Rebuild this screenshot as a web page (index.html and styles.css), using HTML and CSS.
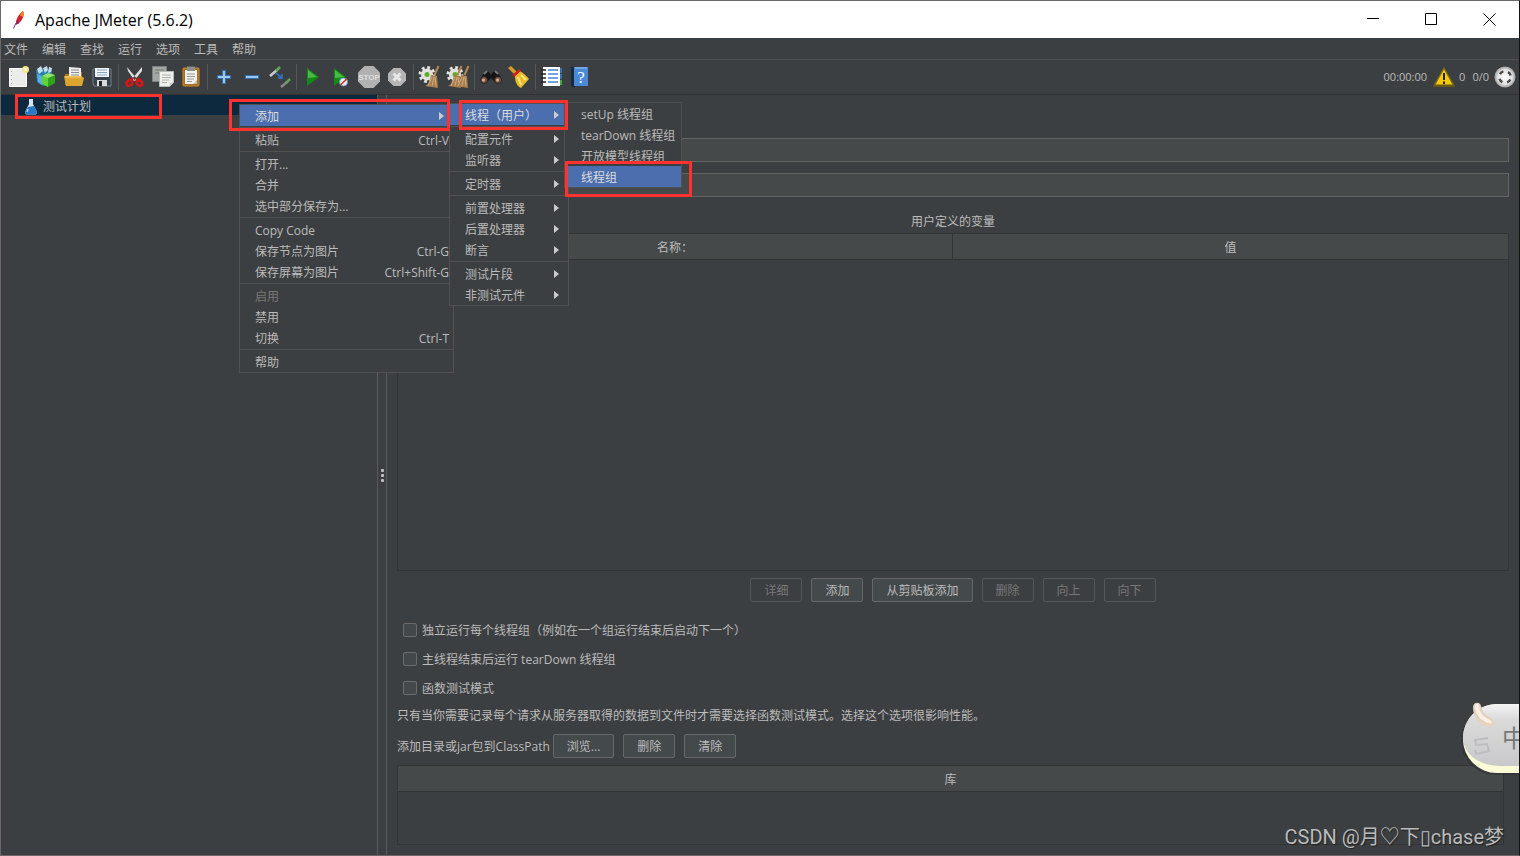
FILE: index.html
```html
<!DOCTYPE html>
<html lang="zh-CN">
<head>
<meta charset="utf-8">
<title>Apache JMeter (5.6.2)</title>
<link rel="stylesheet" href="styles.css">
</head>
<body>
<div class="window">
  <header class="titlebar">
    <svg class="feather" width="14" height="20" viewBox="0 0 14 20"><path d="M1.500 18.500 4 13" stroke="#7a2a78" stroke-width="1"/><path d="M4 14.500C3.500 10 6 5 11 1c1.200 2 .8 5-1 8.500C8.500 12 6.500 13.500 4 14.500z" fill="#d22128"/><path d="M8 6c.8-2 1.500-4 3-5 1 1.500 1 3.500.3 5.500z" fill="#f28a1c"/><path d="M4 14.500c0-2 .3-3.500 1.200-5l2.300 3.500c-1 .8-2 1.300-3.500 1.500z" fill="#9e2064"/></svg>
    <h1 class="title">Apache JMeter (5.6.2)</h1>
    <div class="win-controls">
      <button class="win-btn" aria-label="最小化"><svg width="13" height="13" viewBox="0 0 13 13"><path d="M0 5.500h12" stroke="#000"/></svg></button>
      <button class="win-btn" aria-label="最大化"><svg width="13" height="13" viewBox="0 0 13 13"><path d="M.5.500h11v11H.5z" fill="none" stroke="#000"/></svg></button>
      <button class="win-btn" aria-label="关闭"><svg width="13" height="13" viewBox="0 0 13 13"><path d="m.5.500 12 12m0-12-12 12" stroke="#000"/></svg></button>
    </div>
  </header>
  <nav class="menubar">
    <button>文件</button><button>编辑</button><button>查找</button><button>运行</button><button>选项</button><button>工具</button><button>帮助</button>
  </nav>
  <div class="toolbar">
    <button class="tool" aria-label="新建"><svg width="24" height="24" viewBox="0 0 24 24"><path d="M3.500 3.500h17v18h-17z" fill="#ececea" stroke="#fff"/><path d="M5.500 6v13" stroke="#aaa" stroke-dasharray="1 3"/><circle cx="19.500" cy="4.500" r="3.500" fill="#f4e68a"/><circle cx="19.500" cy="4.500" r="1.500" fill="#fffbe0"/></svg></button>
    <button class="tool" aria-label="模板"><svg width="24" height="24" viewBox="0 0 24 24"><path d="m2 5 7-2 9 2v13l-9 3-6-4z" fill="#2581b5"/><path d="m3 4 4-3 2 5-4 3zm6-1 4-2 1 4-3 3zm6-1 3 1-1 4-3 1z" fill="#c8dce8"/><path d="m3 9 5 2v9l-4-3z" fill="#5ab0dd"/><path d="m8 11 6-3 7 2v8l-7 4-6-3z" fill="#2fa51a"/><path d="m8 11 6 2v9l-6-3z" fill="#5ed238"/><path d="m8 11 6-3 7 2-7 3z" fill="#95e671"/></svg></button>
    <button class="tool" aria-label="打开"><svg width="24" height="24" viewBox="0 0 24 24"><path d="M3 9h4V7h13v13H3z" fill="#a97817"/><path d="m7 2 12 1v12H7z" fill="#eee"/><path d="M9 5h8M9 7.500h8M9 10h8" stroke="#8f8f8f"/><path d="M2 11h17l3 2-2 8H4z" fill="#dca530"/><path d="M3 12h16" stroke="#f9da7d"/></svg></button>
    <button class="tool" aria-label="保存"><svg width="24" height="24" viewBox="0 0 24 24"><path d="M3 4h18v17H4l-1-2z" fill="#384149" stroke="#71818a"/><path d="M5 3h14v9H5z" fill="#f3f6fa"/><path d="M7 5h10M7 7.500h10M7 10h10" stroke="#86a5c9"/><path d="M7 15h10v6H7z" fill="#dadada"/><path d="M9 16h3v5H9z" fill="#202428"/></svg></button>
    <span class="sep"></span>
    <button class="tool" aria-label="剪切"><svg width="24" height="24" viewBox="0 0 24 24"><path d="m4 2 10 12-2 2L5 6zm15 0L9 14l2 2 8-10z" fill="#dedede"/><path d="m10 14-4 1m7-1 4 1" stroke="#c11212" stroke-width="3"/><ellipse cx="6.500" cy="18" rx="3" ry="2.500" transform="rotate(-35 6.500 18)" fill="none" stroke="#d71717" stroke-width="2.500"/><ellipse cx="16.500" cy="18" rx="3" ry="2.500" transform="rotate(35 16.500 18)" fill="none" stroke="#d71717" stroke-width="2.500"/></svg></button>
    <button class="tool" aria-label="复制"><svg width="24" height="24" viewBox="0 0 24 24"><path d="M1.500 1.500h14v15h-14z" fill="#a3a7a3" stroke="#7c807d"/><path d="M4 5h9M4 8h6" stroke="#747874"/><path d="M8.500 6.500h14v11l-4 4h-10z" fill="#efefed" stroke="#b8bab8"/><path d="M11 10h9M11 12.500h9M11 15h7M11 17.500h5" stroke="#b0b0b0"/><path d="M18.500 21.500v-4h4z" fill="#cfcfcf"/></svg></button>
    <button class="tool" aria-label="粘贴"><svg width="24" height="24" viewBox="0 0 24 24"><rect x="4" y="3" width="16" height="18" rx="1" fill="#a56c22" stroke="#d28b25"/><path d="M6 5h12v14H6z" fill="#f1f1ef"/><path d="M8 1.500h8V6H8z" fill="#8c8f8c"/><path d="M8 9h8M8 11.500h8M8 14h7M8 16.500h5" stroke="#989898"/><path d="m14 19 4-4v4z" fill="#bfbfbf"/></svg></button>
    <span class="sep"></span>
    <button class="tool" aria-label="展开"><svg width="24" height="24" viewBox="0 0 24 24"><path d="M12 5v14M5 12h14" stroke="#346eaf" stroke-width="4"/><path d="M12 6v12M6 12h12" stroke="#9bc8f1" stroke-width="2"/></svg></button>
    <button class="tool" aria-label="折叠"><svg width="24" height="24" viewBox="0 0 24 24"><path d="M5 12h14" stroke="#346eaf" stroke-width="4"/><path d="M6 12h12" stroke="#9bc8f1" stroke-width="2"/></svg></button>
    <button class="tool" aria-label="切换"><svg width="24" height="24" viewBox="0 0 24 24"><path d="m2 11 7-6" stroke="#c8ccca" stroke-width="2.500"/><path d="m8 6 4-4" stroke="#65a55b" stroke-width="2.500"/><path d="m13 22 6-5" stroke="#848988" stroke-width="2.500"/><path d="m18 18 4-4" stroke="#659f63" stroke-width="2.500"/><path d="m8 8 6 5m0-4v4H10" fill="none" stroke="#2e79cf" stroke-width="1.500"/></svg></button>
    <span class="sep"></span>
    <button class="tool" aria-label="启动"><svg width="24" height="24" viewBox="0 0 24 24"><path d="m6 3 12 9-12 9z" fill="#138a15"/><path d="m7 5 9 7-9 1z" fill="#49b947"/></svg></button>
    <button class="tool" aria-label="不停顿开始"><svg width="24" height="24" viewBox="0 0 24 24"><path d="m5 3 12 9-12 9z" fill="#138a15"/><path d="m6 5 9 7-9 1z" fill="#49b947"/><circle cx="14.500" cy="17" r="4" fill="#eee" stroke="#6b9bc7"/><path d="m11.500 20 6-6" stroke="#d72b22" stroke-width="1.500"/></svg></button>
    <button class="tool" aria-label="停止"><svg width="24" height="24" viewBox="0 0 24 24"><path d="M7.500 1h9L23 7.500v9L16.500 23h-9L1 16.500v-9z" fill="#b1b1b1"/><text x="12" y="15" class="stop-text">STOP</text></svg></button>
    <button class="tool" aria-label="关闭"><svg width="24" height="24" viewBox="0 0 24 24"><path d="M8.500 3h7L21 8.500v7L15.500 21h-7L3 15.500v-7z" fill="#b5b5b5"/><path d="m8.500 8.500 7 7m0-7-7 7" stroke="#e7e7e7" stroke-width="3"/></svg></button>
    <span class="sep"></span>
    <button class="tool" aria-label="清除"><svg width="24" height="24" viewBox="0 0 24 24"><use href="#gear"/><use href="#brush"/></svg></button>
    <button class="tool" aria-label="清除全部"><svg width="24" height="24" viewBox="0 0 24 24"><use href="#gear"/><use href="#brush" x="-5"/><use href="#brush" x="2"/></svg></button>
    <span class="sep"></span>
    <button class="tool" aria-label="查找"><svg width="24" height="24" viewBox="0 0 24 24"><path d="m3 11 4-5 3 1 2 3 2-3 3-1 4 5 2 4-6 3-5-5-5 5-6-3z" fill="#141414"/><path d="m5 9 3-3m8 0 3 3" stroke="#777" stroke-width="2"/><circle cx="5" cy="15" r="3.500" fill="#7d5440" stroke="#252525"/><circle cx="19" cy="15" r="3.500" fill="#7d5440" stroke="#252525"/><circle cx="4.500" cy="15" r="1.500" fill="#ceb3a0"/><circle cx="18.500" cy="15" r="1.500" fill="#ceb3a0"/></svg></button>
    <button class="tool" aria-label="重置搜索"><svg width="24" height="24" viewBox="0 0 24 24"><path d="m1 3 3-2 6 6-2 3z" fill="#d89d29"/><path d="m8 11 5-5c4 3 7 5 9 8l-8 9c-4-2-6-6-6-12z" fill="#e6bb2d"/><path d="m11 12 3 8m0-10 5 5" stroke="#fbe67a" stroke-width="2"/><path d="m6 11 7-6" stroke="#d0201a" stroke-width="2.500"/></svg></button>
    <span class="sep"></span>
    <button class="tool" aria-label="函数助手"><svg width="24" height="24" viewBox="0 0 24 24"><path d="M3 2h17v19H3z" fill="#fff"/><path d="M20 3h2v5h-2z" fill="#356eb4"/><path d="M20 9h2v5h-2z" fill="#3370be"/><path d="M20 15h2v5h-2z" fill="#41a838"/><path d="M1 5h5M1 9h5M1 13h5M1 17h5" stroke="#222" stroke-width="1.500"/><path d="M8 5h10M8 9h10M8 13h10M8 17h10" stroke="#4287d8" stroke-width="1.500"/></svg></button>
    <button class="tool" aria-label="帮助"><svg width="24" height="24" viewBox="0 0 24 24"><path d="M3 2h4v20H4l-1-2z" fill="#172a42"/><path d="M6 2h14v19H6z" fill="#4a89d5"/><path d="M7 2h12v2H7z" fill="#70a8e6"/><text x="13" y="18" class="help-text">?</text></svg></button>
    <div class="status">
      <span class="elapsed">00:00:00</span>
      <svg width="22" height="20" viewBox="0 0 22 20"><path d="m11 1 10 18H1z" fill="#f3c912" stroke="#796815" stroke-width="1.500" stroke-linejoin="round"/><path d="M1 18.500h20" stroke="#665812" stroke-width="2"/><path d="M11 6v7m0 1.500V17" stroke="#262405" stroke-width="2"/></svg>
      <span class="errors">0</span>
      <span class="threads">0/0</span>
      <svg width="22" height="22" viewBox="0 0 22 22"><defs><radialGradient id="dial"><stop offset="0" stop-color="#fff"/><stop offset=".7" stop-color="#e1e1e1"/><stop offset="1" stop-color="#9c9c9c"/></radialGradient></defs><circle cx="11" cy="11" r="10.500" fill="url(#dial)"/><circle cx="11" cy="11" r="5.800" fill="none" stroke="#494949" stroke-width="2.400" stroke-dasharray="4.200 4.910" stroke-dashoffset="-2.500"/></svg>
    </div>
  </div>
  <div class="workspace">
    <aside class="tree">
      <div class="node">
        <svg width="14" height="17" viewBox="0 0 14 17"><path d="M5 1h4v5l4 8c0 2-1 2.500-2 2.500H3C2 16.500 1 16 1 14l4-8z" fill="#d7e6f2"/><path d="m4 9 6-1 3 6c0 2-1 2.500-2 2.500H3C2 16.500 1 16 1 14z" fill="#2b78c4"/><path d="M4 11 3 14" stroke="#aad3f5" stroke-width="1.500"/></svg>
        <span>测试计划</span>
      </div>
    </aside>
    <div class="splitter"><i></i><i></i><i></i></div>
    <main class="panel">
      <div class="field"><input type="text" aria-label="名称"></div>
      <div class="field"><input type="text" aria-label="注释"></div>
      <h2 class="caption">用户定义的变量</h2>
      <div class="grid grid-vars"><table><thead><tr><th>名称：</th><th>值</th></tr></thead></table></div>
      <div class="actions">
        <button class="btn" disabled>详细</button><button class="btn">添加</button><button class="btn">从剪贴板添加</button><button class="btn" disabled>删除</button><button class="btn" disabled>向上</button><button class="btn" disabled>向下</button>
      </div>
      <div class="options">
        <label><input type="checkbox"><span>独立运行每个线程组（例如在一个组运行结束后启动下一个）</span></label>
        <label><input type="checkbox"><span>主线程结束后运行 tearDown 线程组</span></label>
        <label><input type="checkbox"><span>函数测试模式</span></label>
      </div>
      <p class="note">只有当你需要记录每个请求从服务器取得的数据到文件时才需要选择函数测试模式。选择这个选项很影响性能。</p>
      <div class="classpath"><span>添加目录或jar包到ClassPath</span><button class="btn">浏览...</button><button class="btn">删除</button><button class="btn">清除</button></div>
      <div class="grid grid-lib"><table><thead><tr><th>库</th></tr></thead></table></div>
    </main>
  </div>

  <div class="menu menu-context">
    <button class="item active">添加<span class="arrow"></span></button>
    <hr>
    <button class="item">粘贴<kbd>Ctrl-V</kbd></button>
    <hr>
    <button class="item">打开...</button>
    <button class="item">合并</button>
    <button class="item">选中部分保存为...</button>
    <hr>
    <button class="item">Copy Code</button>
    <button class="item">保存节点为图片<kbd>Ctrl-G</kbd></button>
    <button class="item">保存屏幕为图片<kbd>Ctrl+Shift-G</kbd></button>
    <hr>
    <button class="item" disabled>启用</button>
    <button class="item">禁用</button>
    <button class="item">切换<kbd>Ctrl-T</kbd></button>
    <hr>
    <button class="item">帮助</button>
  </div>
  <div class="menu menu-add">
    <button class="item active">线程（用户）<span class="arrow"></span></button>
    <hr>
    <button class="item">配置元件<span class="arrow"></span></button>
    <button class="item">监听器<span class="arrow"></span></button>
    <hr>
    <button class="item">定时器<span class="arrow"></span></button>
    <hr>
    <button class="item">前置处理器<span class="arrow"></span></button>
    <button class="item">后置处理器<span class="arrow"></span></button>
    <button class="item">断言<span class="arrow"></span></button>
    <hr>
    <button class="item">测试片段<span class="arrow"></span></button>
    <button class="item">非测试元件<span class="arrow"></span></button>
  </div>
  <div class="menu menu-threads">
    <button class="item">setUp 线程组</button>
    <button class="item">tearDown 线程组</button>
    <button class="item">开放模型线程组</button>
    <button class="item active">线程组</button>
  </div>

  <div class="mark mark-plan"></div>
  <div class="mark mark-add"></div>
  <div class="mark mark-users"></div>
  <div class="mark mark-group"></div>

  <svg class="ime" width="62" height="80" viewBox="0 0 62 80">
    <defs><linearGradient id="pill" x2="0" y2="1"><stop offset="0" stop-color="#f4f4f4"/><stop offset=".25" stop-color="#dadada"/><stop offset="1" stop-color="#c9c9cb"/></linearGradient></defs>
    <rect x="3" y="8" width="110" height="69" rx="34" fill="#2b2d2f" opacity=".5"/>
    <rect x="5" y="6" width="110" height="69" rx="34" fill="#fbfbd8"/>
    <path d="M39 6h76v62H41C20 67 7 57 5 42 4 22 20 6 39 6z" fill="url(#pill)"/>
    <path d="m30 40-13 2 1 5 11-1 2 7-13 3-1-4" fill="none" stroke="#bdbdbf" stroke-width="2"/>
    <path d="M15 9c0-5 7-6 8-1 2 8 5 9 11 13 5 4 1 9-4 8-9-2-15-10-15-20z" fill="#e6d3bf"/>
    <path d="M17 8c1-3 4-3 4 1 1 8 6 10 12 14 2 2 0 3-3 2-7-3-13-8-13-17z" fill="#faf0e6"/>
    <text x="44" y="49" class="ime-text">中</text>
  </svg>
  <div class="watermark">CSDN @月♡下▯chase梦</div>
</div>
<svg class="symbols" width="0" height="0"><defs>
  <g id="gear"><circle cx="9" cy="9.500" r="6" fill="#e2e2df"/><circle cx="9" cy="9.500" r="7" fill="none" stroke="#e2e2df" stroke-width="3" stroke-dasharray="2.800 2.700"/><circle cx="9" cy="9.500" r="2.500" fill="#5fae27"/></g>
  <g id="brush"><path d="m20.500 1-4 9" stroke="#b48652" stroke-width="2"/><path d="m13 10 6 1 1 12-13-2c4-2 5-6 6-11z" fill="#a77d50"/><path d="m14 12-4 9m6-9-2 9m3-9 1 9" stroke="#d1ae7c"/></g>
</defs></svg>
</body>
</html>
```

FILE: styles.css
```css
* { box-sizing: border-box; }

body {
  margin: 0;
  background: #3c3f41;
  color: #bbbbbb;
  font: 12px/20px "Open Sans", "Noto Sans CJK SC", sans-serif;
}

button, input { font: inherit; color: inherit; }
button { border: 0; padding: 0; background: none; white-space: nowrap; }
h1, h2, p { margin: 0; font-size: inherit; font-weight: normal; }

.window {
  position: relative;
  display: flex;
  flex-direction: column;
  height: 100vh;
  overflow: hidden;
  border: 1px solid #6b6869;
  border-right-color: #141414;
}

.titlebar {
  display: flex;
  align-items: center;
  height: 37px;
  padding: 0 1px 0 11px;
  background: #ffffff;
  color: #000000;
}
.title { flex: 1; margin-left: 9px; font-size: 16px; }
.win-controls { display: flex; }
.win-btn { display: flex; align-items: center; justify-content: center; width: 58px; height: 36px; }

.menubar {
  display: flex;
  gap: 14px;
  height: 22px;
  padding: 2px 0 0 3px;
  border-bottom: 1px solid #515151;
}

.toolbar {
  display: flex;
  align-items: center;
  height: 35px;
  padding-left: 3px;
  border-bottom: 1px solid #323232;
}
.tool { display: flex; align-items: center; justify-content: center; width: 28px; height: 28px; }
.sep { width: 5px; height: 26px; background: linear-gradient(#555555, #555555) 2px 0 / 1px 100% no-repeat; }
.stop-text { font: bold 8px "Liberation Sans", sans-serif; fill: #dddddd; text-anchor: middle; }
.help-text { font: 17px "Liberation Serif", serif; fill: #ffffff; text-anchor: middle; }
.status { display: flex; align-items: center; margin-left: auto; padding-right: 3px; font-size: 11px; }
.elapsed { margin-right: 6px; }
.errors { margin: 0 7px 0 4px; }
.threads { margin-right: 5px; }

.workspace { display: flex; flex: 1; min-height: 0; }
.tree { width: 376px; flex: none; }
.node { display: flex; align-items: center; gap: 5px; height: 20px; padding: 3px 0 0 23px; background: #0d293e; }
.splitter {
  display: flex;
  flex-direction: column;
  align-items: center;
  justify-content: center;
  gap: 2px;
  flex: none;
  width: 10px;
  border: solid #5a5a5a;
  border-width: 0 1px;
}
.splitter i { width: 3px; height: 3px; border-radius: 1px; background: #c0c0c0; }

.panel { display: flex; flex-direction: column; flex: 1; min-width: 0; padding: 43px 10px 10px; }
.field { display: flex; align-items: center; margin-bottom: 11px; padding-left: 48px; }
.field input { flex: 1; height: 24px; border: 1px solid #646464; background: #45494a; }
.caption { height: 24px; line-height: 27px; text-align: center; }

.grid { border: 1px solid #323435; }
.grid-vars { flex: 1; min-height: 0; margin-top: 1px; }
.grid-lib { height: 80px; margin: 7px 5px 0 0; }
.grid table { width: 100%; border-collapse: separate; border-spacing: 0; table-layout: fixed; }
.grid th {
  height: 26px;
  padding: 3px 0 0;
  background: #45494a;
  border: solid #323435;
  border-width: 0 1px 1px 0;
  font-weight: normal;
}
.grid th:last-child { border-right: 0; }

.actions { display: flex; justify-content: center; gap: 9px; margin-top: 7px; }
.btn { height: 24px; padding: 2px 13px 0; border: 1px solid #66696b; border-radius: 2px; background: #44494b; }
.btn:disabled { color: #777777; border-color: #55585a; background: none; }

.options { display: flex; flex-direction: column; margin-top: 13px; padding-left: 6px; }
.options label { display: flex; align-items: center; gap: 5px; height: 29px; }
.options span { padding-top: 3px; }
.options input {
  appearance: none;
  width: 14px;
  height: 14px;
  margin: 0;
  border: 1px solid #6b6b6b;
  border-radius: 2px;
  background: #43494a;
}
.note { height: 25px; line-height: 27px; white-space: nowrap; }
.classpath { display: flex; align-items: center; gap: 9px; margin-top: 7px; }
.classpath span { margin-right: -6px; padding-top: 2px; }

.menu { position: absolute; display: flex; flex-direction: column; border: 1px solid #515151; background: #3c3f41; }
.menu-context { left: 238px; top: 103px; width: 215px; }
.menu-add { left: 448px; top: 102px; width: 120px; }
.menu-threads { left: 563px; top: 101px; width: 118px; }
.item { display: flex; align-items: center; height: 21px; padding: 2px 4px 0 15px; }
.item:disabled { color: #777777; }
.item.active { background: #4b6eaf; color: #dddddd; }
.item kbd { margin-left: auto; font: inherit; }
.menu hr { width: 100%; height: 3px; margin: 0; border: 0; background: linear-gradient(#515151, #515151) 0 1px / 100% 1px no-repeat; }
.arrow { margin: 0 5px 2px auto; border: solid transparent; border-width: 4px 0 4px 5px; border-left-color: #cccccc; }
.menu-threads .item { padding-left: 16px; }

.mark { position: absolute; border: 3px solid #ff322f; }
.mark-plan { left: 14px; top: 93px; width: 147px; height: 25px; }
.mark-add { left: 228px; top: 98px; width: 221px; height: 32px; }
.mark-users { left: 458px; top: 99px; width: 109px; height: 30px; }
.mark-group { left: 564px; top: 160px; width: 127px; height: 36px; }

.ime { position: absolute; right: -1px; bottom: 77px; }
.ime-text { font: 24px "Noto Sans CJK SC", sans-serif; fill: #777777; }
.watermark {
  position: absolute;
  right: 15px;
  bottom: 5px;
  font: 20px/26px Roboto, "Noto Sans CJK SC", sans-serif;
  color: #b9bbbc;
  text-shadow: 1px 1px 1px #222222;
  white-space: nowrap;
}
.symbols { position: absolute; }
```
